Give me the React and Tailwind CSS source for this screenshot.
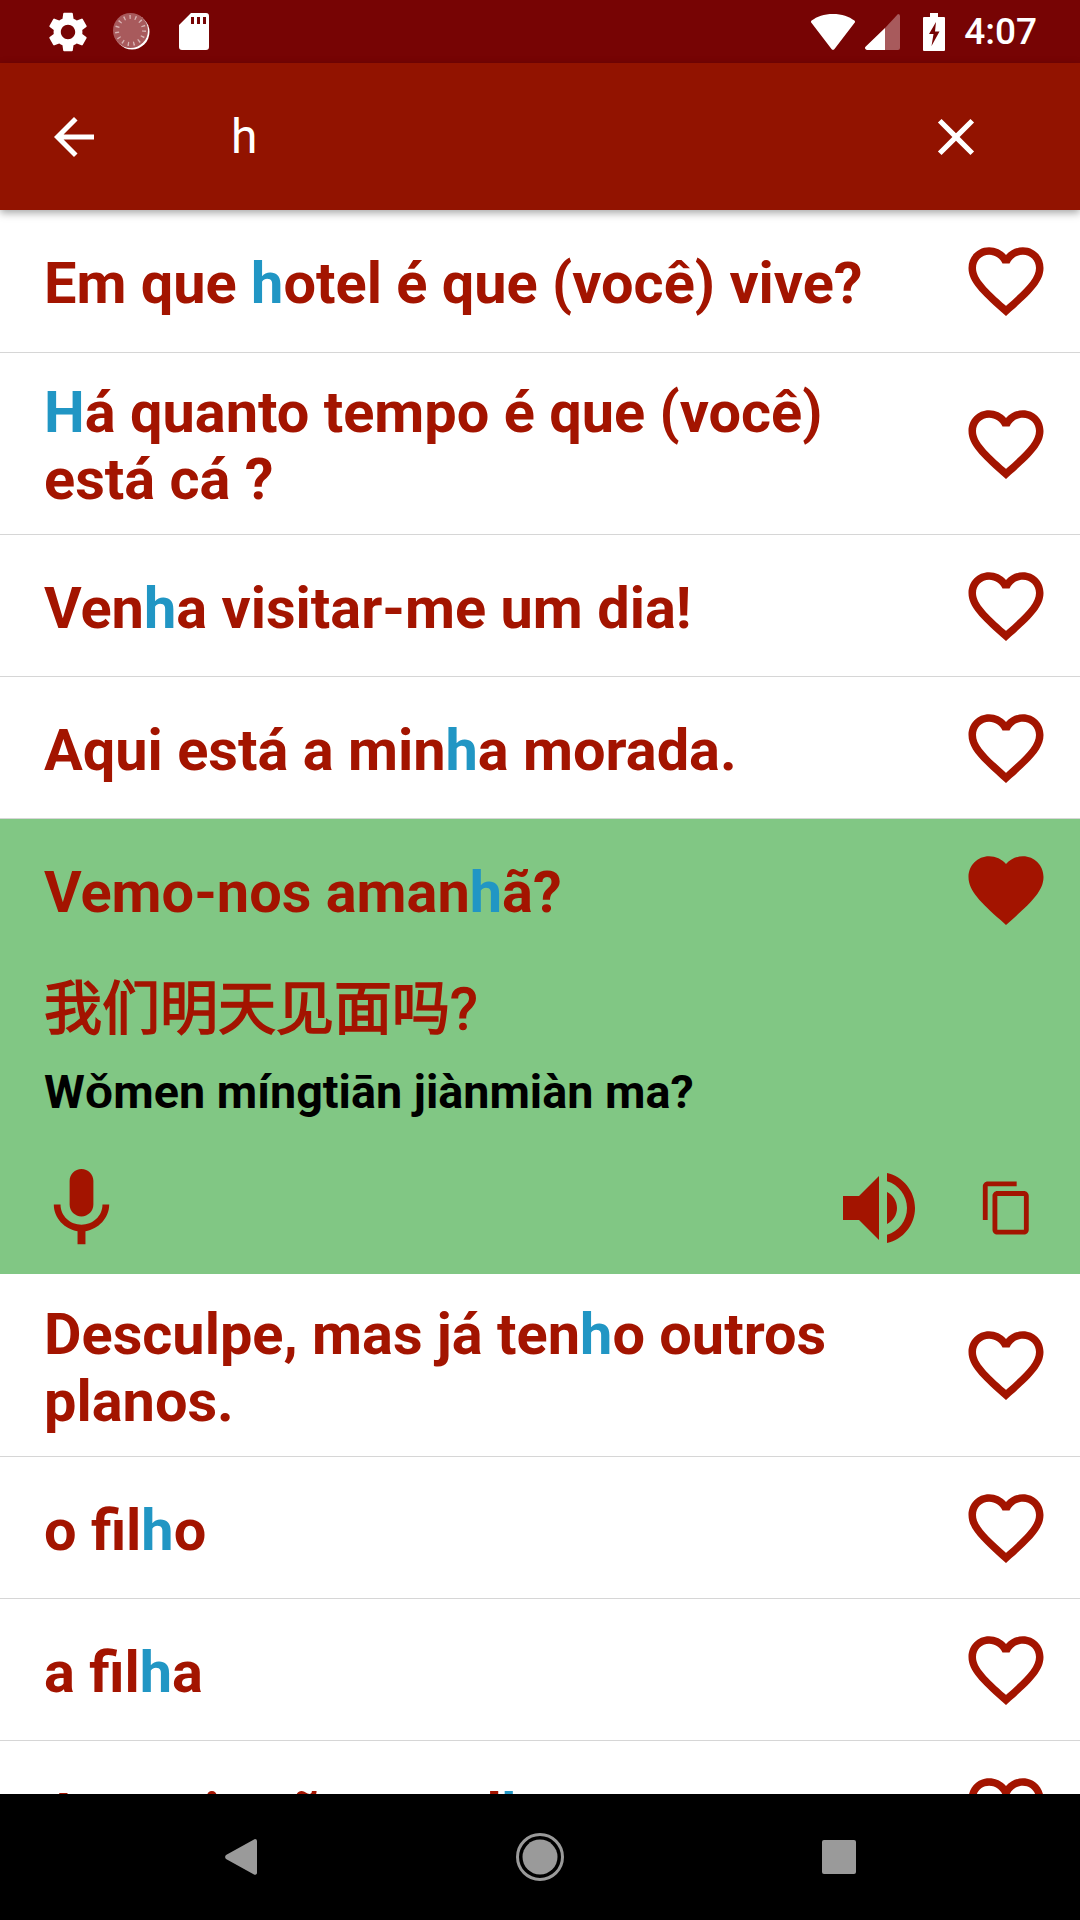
import React from "react";

const RED = "#a31400";

function Heart({ filled }) {
  return (
    <svg viewBox="0 0 24 24" className="w-[90px] h-[90px] shrink-0" fill={RED}>
      {filled ? (
        <path d="M12 21.35l-1.45-1.32C5.4 15.36 2 12.28 2 8.5 2 5.42 4.42 3 7.5 3c1.74 0 3.41.81 4.5 2.09C13.09 3.81 14.76 3 16.5 3 19.58 3 22 5.42 22 8.5c0 3.78-3.4 6.86-8.55 11.54L12 21.35z" />
      ) : (
        <path d="M16.5 3c-1.74 0-3.41.81-4.5 2.09C10.91 3.81 9.24 3 7.5 3 4.42 3 2 5.42 2 8.5c0 3.78 3.4 6.86 8.55 11.54L12 21.35l1.45-1.32C18.6 15.36 22 12.28 22 8.5 22 5.42 19.58 3 16.5 3zm-4.4 15.55l-.1.1-.1-.1C7.14 14.24 4 11.39 4 8.5 4 6.5 5.5 5 7.5 5c1.54 0 3.04.99 3.57 2.36h1.87C13.46 5.99 14.96 5 16.5 5c2 0 3.5 1.5 3.5 3.5 0 2.89-3.14 5.74-7.9 10.05z" />
      )}
    </svg>
  );
}

function Phrase({ pre, hi, post }) {
  return (
    <div className="flex-1 pr-[20px] pt-[5px] font-bold text-[57.7px] leading-[67px] text-[#a31400] font-['Roboto',sans-serif]">
      {pre}
      <span className="text-[#2196c4]">{hi}</span>
      {post}
    </div>
  );
}

function Row({ pre, hi, post, h }) {
  return (
    <div className={`flex items-center pl-[44px] pr-[29px] border-b border-[#d6d6d6] bg-white shrink-0 ${h}`}>
      <Phrase pre={pre} hi={hi} post={post} />
      <Heart />
    </div>
  );
}

export default function App() {
  return (
    <div className="w-[1080px] h-[1920px] flex flex-col overflow-hidden bg-white font-['Roboto',sans-serif]">
      <div className="h-[63px] bg-[#770404] flex items-center shrink-0 text-white">
        <div className="flex items-center pl-[44px] flex-1">
          <svg viewBox="0 0 24 24" className="w-[48px] h-[48px]" fill="#fff">
            <path d="M19.14 12.94c.04-.3.06-.61.06-.94 0-.32-.02-.64-.07-.94l2.03-1.58a.49.49 0 0 0 .12-.61l-1.92-3.32a.49.49 0 0 0-.59-.22l-2.39.96c-.5-.38-1.03-.7-1.62-.94l-.36-2.54a.48.48 0 0 0-.48-.41h-3.84c-.24 0-.43.17-.47.41l-.36 2.54c-.59.24-1.13.57-1.62.94l-2.39-.96c-.22-.08-.47 0-.59.22L2.74 8.87c-.12.21-.08.47.12.61l2.03 1.58c-.05.3-.09.63-.09.94s.02.64.07.94l-2.03 1.58a.49.49 0 0 0-.12.61l1.92 3.32c.12.22.37.29.59.22l2.39-.96c.5.38 1.03.7 1.62.94l.36 2.54c.05.24.24.41.48.41h3.84c.24 0 .44-.17.47-.41l.36-2.54c.59-.24 1.13-.56 1.62-.94l2.39.96c.22.08.47 0 .59-.22l1.92-3.32c.12-.22.07-.47-.12-.61l-2.01-1.58zM12 15.6c-1.98 0-3.6-1.62-3.6-3.6s1.62-3.6 3.6-3.6 3.6 1.62 3.6 3.6-1.62 3.6-3.6 3.6z" />
          </svg>
          <svg viewBox="0 0 37 37" className="w-[37px] h-[37px] ml-[21px]">
            <circle cx="19" cy="19" r="17.5" fill="#fff" />
            <circle cx="17.5" cy="17.5" r="17.5" fill="#a85a5c" />
            <circle cx="17.5" cy="17.5" r="13.5" fill="none" stroke="#d9b6b6" strokeWidth="4" strokeDasharray="1.3 4.35" />
          </svg>
          <svg viewBox="0 0 30 37" className="w-[30px] h-[37px] ml-[29px]" fill="#fff">
            <path fillRule="evenodd" d="M12 0h15a3 3 0 0 1 3 3v31a3 3 0 0 1-3 3H3a3 3 0 0 1-3-3V12zM12 4v7h3V4zM18 4v7h3V4zM24 4v7h3V4z" />
          </svg>
        </div>
        <div className="flex items-center pr-[43px]">
          <svg viewBox="0 0 44 36" className="w-[44px] h-[36px]" fill="#fff">
            <path d="M22 0C13 0 6 2.5 .6 6.6a1.5 1.5 0 0 0-.2 2.1L20.5 35a2 2 0 0 0 3 0L43.6 8.7a1.5 1.5 0 0 0-.2-2.1C38 2.5 31 0 22 0z" />
          </svg>
          <svg viewBox="0 0 35 36" className="w-[35px] h-[36px] ml-[10px]">
            <path d="M33 0a2 2 0 0 1 2 2v32a2 2 0 0 1-2 2H20V14z" fill="#a85a5c" />
            <path d="M20 14v22H2a2 2 0 0 1-1.500-3.300z" fill="#fff" />
          </svg>
          <svg viewBox="0 0 22 38" className="w-[22px] h-[38px] ml-[23px]">
            <path fillRule="evenodd" fill="#fff" d="M7 0h8v4h6a1 1 0 0 1 1 1v32a1 1 0 0 1-1 1H1a1 1 0 0 1-1-1V5a1 1 0 0 1 1-1h6zM13 9L6 21h4.500L8.500 33 16.500 18.500H12z" />
          </svg>
          <span className="text-[37px] font-medium ml-[19px] leading-none">4:07</span>
        </div>
      </div>

      <div className="h-[147px] bg-[#921300] flex items-center shrink-0 relative z-10 shadow-[0_3px_8px_rgba(0,0,0,0.35)] text-white">
        <svg viewBox="0 0 24 24" className="w-[60px] h-[60px] ml-[44px]" fill="#fff">
          <path d="M20 11H7.830l5.590-5.590L12 4l-8 8 8 8 1.410-1.410L7.830 13H20v-2z" />
        </svg>
        <span className="text-[48px] ml-[127px] flex-1 leading-none">h</span>
        <svg viewBox="0 0 24 24" className="w-[62px] h-[62px] mr-[93px]" fill="#fff">
          <path d="M19 6.410L17.590 5 12 10.590 6.410 5 5 6.410 10.590 12 5 17.590 6.410 19 12 13.410 17.590 19 19 17.590 13.410 12z" />
        </svg>
      </div>

      <div className="flex-1 overflow-hidden flex flex-col">
        <Row h="h-[143px]" pre="Em que " hi="h" post="otel é que (você) vive?" />
        <Row h="h-[182px]" pre="" hi="H" post="á quanto tempo é que (você) está cá ?" />
        <Row h="h-[142px]" pre="Ven" hi="h" post="a visitar-me um dia!" />
        <Row h="h-[142px]" pre="Aqui está a min" hi="h" post="a morada." />

        <div className="h-[455px] bg-[#81c784] shrink-0 flex flex-col pl-[44px] pr-[29px] pt-[26px]">
          <div className="flex items-center h-[90px]">
            <Phrase pre="Vemo-nos aman" hi="h" post="ã?" />
            <Heart filled />
          </div>
          <div className="text-[58px] leading-[68px] font-normal [-webkit-text-stroke:1.7px_#a31400] text-[#a31400] font-['Roboto','Noto_Sans_CJK_SC',sans-serif] mt-[40px]">我们明天见面吗?</div>
          <div className="text-[46.7px] leading-[54px] font-bold text-black mt-[22px]">Wǒmen míngtiān jiànmiàn ma?</div>
          <div className="flex items-center mt-[41px] h-[96px]">
            <svg viewBox="0 0 24 24" className="w-[95px] h-[95px] ml-[-10px]" fill={RED}>
              <path d="M12 14c1.660 0 3-1.340 3-3V5c0-1.660-1.340-3-3-3S9 3.340 9 5v6c0 1.660 1.340 3 3 3zm5.300-3c0 3-2.540 5.100-5.300 5.100S6.700 14 6.700 11H5c0 3.410 2.720 6.230 6 6.720V21h2v-3.280c3.280-.48 6-3.300 6-6.720h-1.700z" />
            </svg>
            <div className="flex-1" />
            <svg viewBox="0 0 24 24" className="w-[96px] h-[96px] mr-[51px]" fill={RED}>
              <path d="M3 9v6h4l5 5V4L7 9H3zm13.500 3c0-1.770-1.020-3.290-2.500-4.030v8.050c1.480-.73 2.500-2.250 2.500-4.020zM14 3.230v2.060c2.890.86 5 3.540 5 6.710s-2.110 5.850-5 6.710v2.060c4.010-.91 7-4.490 7-8.770s-2.990-7.860-7-8.770z" />
            </svg>
            <svg viewBox="0 0 24 24" className="w-[58px] h-[58px] mr-[15px]" fill={RED}>
              <path d="M16 1H4c-1.100 0-2 .9-2 2v14h2V3h12V1zm3 4H8c-1.100 0-2 .9-2 2v14c0 1.100.9 2 2 2h11c1.100 0 2-.9 2-2V7c0-1.100-.9-2-2-2zm0 16H8V7h11v14z" />
            </svg>
          </div>
        </div>

        <Row h="h-[183px]" pre="Desculpe, mas já ten" hi="h" post="o outros planos." />
        <Row h="h-[142px]" pre="o fil" hi="h" post="o" />
        <Row h="h-[142px]" pre="a fil" hi="h" post="a" />
        <Row h="h-[142px]" pre="A sua irmã e a vel" hi="h" post="a" />
      </div>

      <div className="h-[126px] bg-black shrink-0 flex items-center justify-between pl-[225px] pr-[224px]">
        <svg viewBox="0 0 32 36" className="w-[32px] h-[36px]" fill="#9a9a9a">
          <path d="M30 0a2 2 0 0 1 2 2v32a2 2 0 0 1-3 1.500L1 20a3 3 0 0 1 0-4L29 .5z" />
        </svg>
        <svg viewBox="0 0 48 48" className="w-[48px] h-[48px]">
          <circle cx="24" cy="24" r="22.500" fill="none" stroke="#9a9a9a" strokeWidth="3" />
          <circle cx="24" cy="24" r="17.500" fill="#9a9a9a" />
        </svg>
        <div className="w-[34px] h-[34px] rounded-[2px] bg-[#9a9a9a]" />
      </div>
    </div>
  );
}
